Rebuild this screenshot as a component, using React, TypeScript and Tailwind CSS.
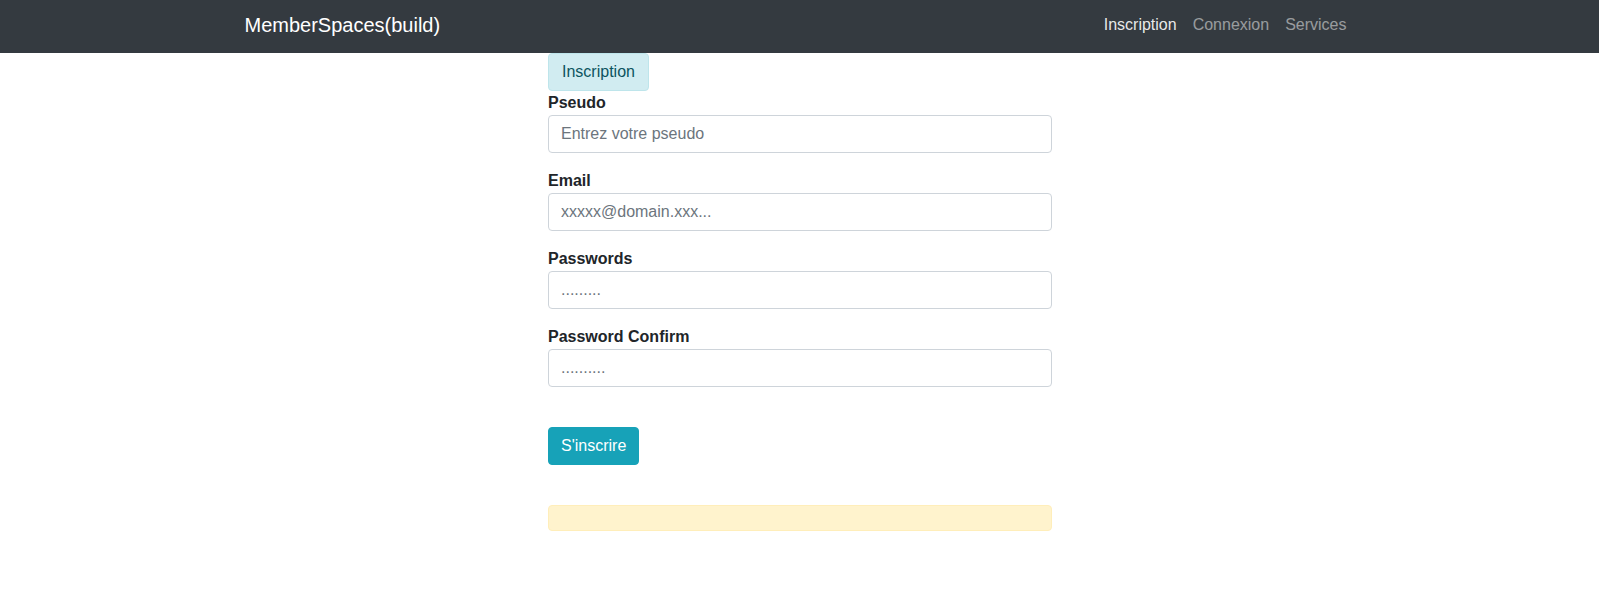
import React from "react";

export default function App() {
  return (
    <div className="min-h-[594px] bg-white text-[16px] leading-[24px] text-[#212529]" style={{ fontFamily: '"Liberation Sans", Arial, sans-serif' }}>
      <nav className="h-[53px] bg-[#343a40]">
        <div className="mx-auto flex h-full w-[1140px] items-start justify-between px-[15px]">
          <a className="mt-[10px] text-[20px] leading-[30px] text-white">MemberSpaces(build)</a>
          <div className="mt-[13px] flex items-center">
            <a className="px-[8px] text-[rgba(255,255,255,0.9)]">Inscription</a>
            <a className="px-[8px] text-[rgba(255,255,255,0.5)]">Connexion</a>
            <a className="px-[8px] text-[rgba(255,255,255,0.5)]">Services</a>
          </div>
        </div>
      </nav>
      <div className="mx-auto w-[1140px] px-[15px]">
        <div className="ml-[303.5px] w-[504px]">
          <div className="inline-block rounded-[4px] border border-[#bee5eb] bg-[#d1ecf1] px-[13px] py-[6px] text-[#0c5460]">Inscription</div>
          {[
            ["Pseudo", "Entrez votre pseudo"],
            ["Email", "xxxxx@domain.xxx..."],
            ["Passwords", "........."],
            ["Password Confirm", ".........."],
          ].map(([label, ph]) => (
            <div key={label} className="mb-[16px]">
              <label className="block font-bold">{label}</label>
              <input
                className="block h-[38px] w-full rounded-[4px] border border-[#ced4da] px-[12px] py-[6px] text-[16px] text-[#495057] placeholder:text-[#6c757d] outline-none"
                placeholder={ph}
              />
            </div>
          ))}
          <div className="h-[24px]" />
          <button className="h-[38px] rounded-[4px] border border-[#17a2b8] bg-[#17a2b8] px-[12px] text-[16px] text-white">S'inscrire</button>
          <div className="h-[40px]" />
          <div className="h-[26px] rounded-[4px] border border-[#ffeeba] bg-[#fff3cd]" />
        </div>
      </div>
    </div>
  );
}
